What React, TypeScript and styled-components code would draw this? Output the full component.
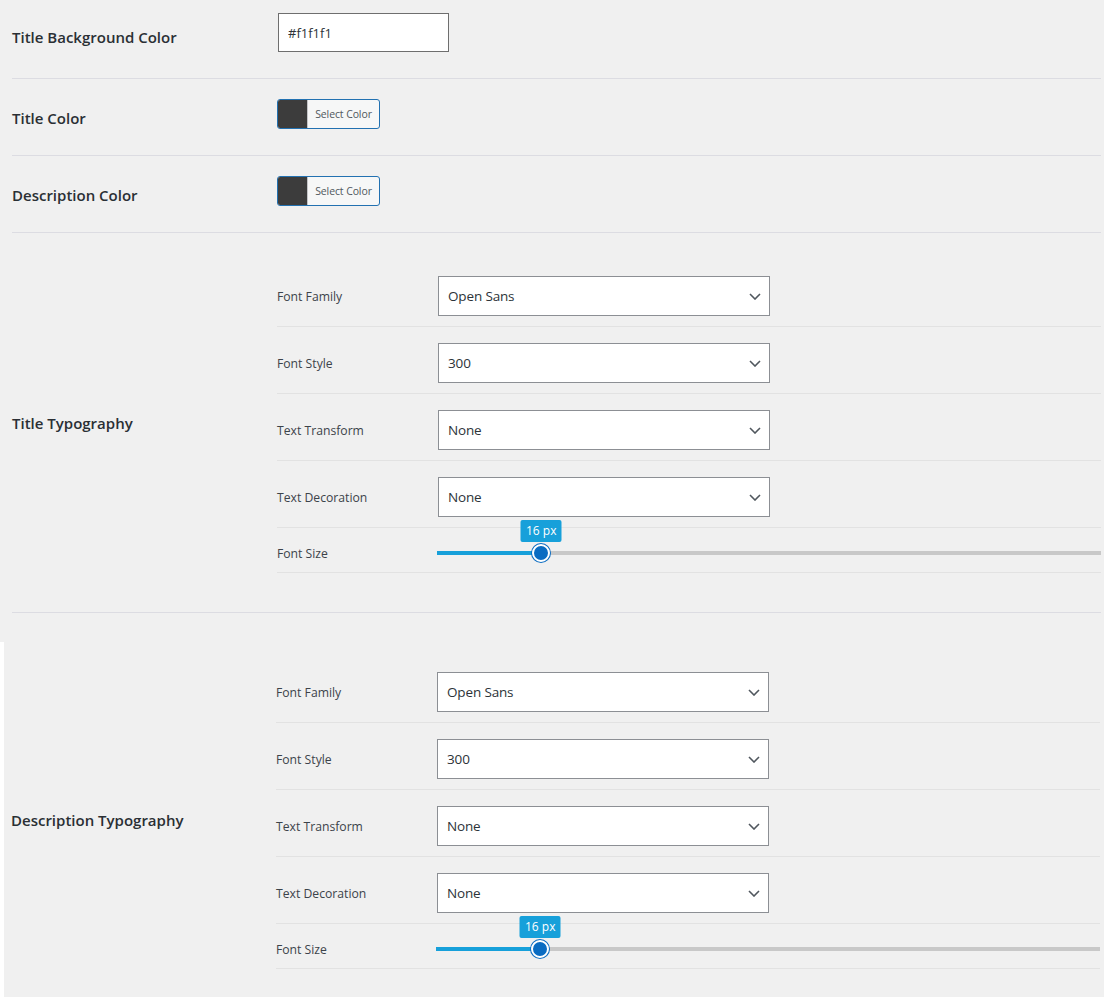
import React from 'react';
import styled, { createGlobalStyle } from 'styled-components';

const GlobalStyle = createGlobalStyle`
  html, body {
    margin: 0;
    padding: 0;
    background: #f0f0f0;
  }
  body {
    font-family: 'Open Sans', 'Noto Sans', sans-serif;
    color: #23282d;
  }
  * {
    box-sizing: border-box;
  }
`;

interface TypographyProps {
  family: string;
  style: string;
  transform: string;
  decoration: string;
  size: number;
  pad: string;
}

const Chevron = () => (
  <svg width="12" height="7" viewBox="0 0 12 7" fill="none">
    <path d="M1 1l5 5 5-5" stroke="#50575e" strokeWidth="1.6" />
  </svg>
);

const SelectBox = ({ value }: { value: string }) => (
  <Select>
    <span>{value}</span>
    <Chevron />
  </Select>
);

const ColorButton = () => (
  <ColorPicker>
    <Swatch />
    <PickerText>Select Color</PickerText>
  </ColorPicker>
);

const FontSizeSlider = ({ value }: { value: number }) => {
  const percent = (value / 100) * 100;
  return (
    <SliderTrack>
      <SliderFill style={{ width: `${percent}%` }} />
      <SliderKnob style={{ left: `${percent}%` }}>
        <SliderTip>{value} px</SliderTip>
      </SliderKnob>
    </SliderTrack>
  );
};

const TypographyTable = ({ family, style, transform, decoration, size, pad }: TypographyProps) => (
  <InnerTable $pad={pad}>
    <InnerRow>
      <InnerLabel>Font Family</InnerLabel>
      <SelectBox value={family} />
    </InnerRow>
    <InnerRow>
      <InnerLabel>Font Style</InnerLabel>
      <SelectBox value={style} />
    </InnerRow>
    <InnerRow>
      <InnerLabel>Text Transform</InnerLabel>
      <SelectBox value={transform} />
    </InnerRow>
    <InnerRow>
      <InnerLabel>Text Decoration</InnerLabel>
      <SelectBox value={decoration} />
    </InnerRow>
    <SliderRow>
      <InnerLabel>Font Size</InnerLabel>
      <FontSizeSlider value={size} />
    </SliderRow>
  </InnerTable>
);

export default function App() {
  return (
    <Page>
      <GlobalStyle />
      <TopSection>
        <SettingRow $pad="13px 0 26px">
          <RowLabel $shift>Title Background Color</RowLabel>
          <TextField defaultValue="#f1f1f1" />
        </SettingRow>
        <SettingRow $pad="20px 0 26px">
          <RowLabel $shift>Title Color</RowLabel>
          <ColorButton />
        </SettingRow>
        <SettingRow $pad="20px 0 26px">
          <RowLabel $shift>Description Color</RowLabel>
          <ColorButton />
        </SettingRow>
        <SettingRow $pad="0">
          <RowLabel>Title Typography</RowLabel>
          <TypographyTable
            family="Open Sans"
            style="300"
            transform="None"
            decoration="None"
            size={16}
            pad="27px 0 39px"
          />
        </SettingRow>
      </TopSection>
      <BottomSection>
        <SettingRow $pad="0" $plain>
          <RowLabel>Description Typography</RowLabel>
          <TypographyTable
            family="Open Sans"
            style="300"
            transform="None"
            decoration="None"
            size={16}
            pad="14px 0 28px"
          />
        </SettingRow>
      </BottomSection>
    </Page>
  );
}

const Page = styled.div`
  width: 1104px;
  height: 997px;
  overflow: hidden;
  background: #f0f0f0;
`;

const TopSection = styled.div`
  padding: 0 3px 0 12px;
`;

const BottomSection = styled.div`
  margin-top: 29px;
  height: 355px;
  border-left: 4px solid #ffffff;
  padding: 0 4px 0 7px;
  background: #f0f0f0;
`;

const SettingRow = styled.div<{ $pad: string; $plain?: boolean }>`
  display: grid;
  grid-template-columns: 265px 1fr;
  align-items: center;
  padding: ${(p) => p.$pad};
  border-bottom: ${(p) => (p.$plain ? 'none' : '1px solid #dcdce2')};
`;

const RowLabel = styled.div<{ $shift?: boolean }>`
  padding-top: ${(p) => (p.$shift ? '8px' : '0')};
  font-size: 15px;
  font-weight: 600;
  line-height: 20px;
  color: #2a2f34;
`;

const TextField = styled.input`
  width: 171px;
  height: 39px;
  margin-left: 1px;
  padding: 0 9px;
  border: 1px solid #6e6e6e;
  border-radius: 0;
  background: #ffffff;
  font-family: 'Open Sans', 'Noto Sans', sans-serif;
  font-size: 13px;
  color: #2c3338;
  outline: none;
`;

const ColorPicker = styled.div`
  display: flex;
  align-items: stretch;
  width: 103px;
  height: 30px;
  border: 1px solid #2271b1;
  border-radius: 3px;
  overflow: hidden;
  background: #f6f7f7;
`;

const Swatch = styled.div`
  width: 30px;
  background: #3c3c3c;
  border-right: 1px solid #c3c4c7;
`;

const PickerText = styled.div`
  flex: 1;
  display: flex;
  align-items: center;
  justify-content: center;
  font-size: 10.5px;
  color: #50575e;
  letter-spacing: -0.1px;
`;

const InnerTable = styled.div<{ $pad: string }>`
  display: flex;
  flex-direction: column;
  padding: ${(p) => p.$pad};
`;

const InnerRow = styled.div`
  display: grid;
  grid-template-columns: 161px 1fr;
  align-items: center;
  padding: 16px 0 10px;
  border-bottom: 1px solid #e2e2e2;
`;

const SliderRow = styled(InnerRow)`
  grid-template-columns: 160px 1fr;
  padding: 15px 0 9px;
`;

const InnerLabel = styled.div`
  padding-top: 2px;
  font-size: 12.2px;
  line-height: 18px;
  color: #3c434a;
`;

const Select = styled.div`
  display: flex;
  align-items: center;
  justify-content: space-between;
  width: 332px;
  height: 40px;
  padding: 0 8px 0 9px;
  border: 1px solid #8c8f94;
  background: #ffffff;
  font-size: 13.5px;
  color: #2c3338;
  letter-spacing: -0.15px;
`;

const SliderTrack = styled.div`
  position: relative;
  height: 4px;
  background: #c8c8c8;
`;

const SliderFill = styled.div`
  height: 100%;
  background: #17a0da;
`;

const SliderKnob = styled.div`
  position: absolute;
  top: 50%;
  width: 18px;
  height: 18px;
  margin-left: -11px;
  margin-top: -9px;
  border-radius: 50%;
  background: #0a6cc2;
  border: 2px solid #ffffff;
  box-shadow: 0 0 0 1px #0a6cc2;
`;

const SliderTip = styled.div`
  position: absolute;
  bottom: 18px;
  left: 50%;
  transform: translateX(-50%);
  width: 41px;
  height: 22px;
  border-radius: 2px;
  background: #17a0da;
  color: #ffffff;
  font-size: 12px;
  font-weight: 500;
  line-height: 22px;
  text-align: center;
  white-space: nowrap;
`;
